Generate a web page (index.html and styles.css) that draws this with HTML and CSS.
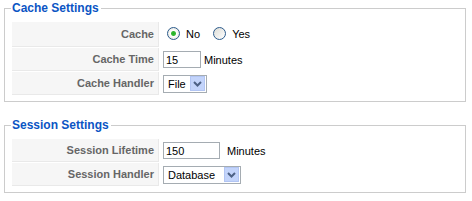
FILE: index.html
```html
<!DOCTYPE html>
<html lang="en">
<head>
    <meta charset="UTF-8">
    <title>Global Configuration</title>
    <link rel="stylesheet" href="styles.css">
</head>
<body>
    <fieldset class="adminform">
        <legend>Cache Settings</legend>
        <table class="admintable">
            <tr class="tall">
                <td class="key">Cache</td>
                <td>
                    <label class="opt"><input type="radio" name="caching" checked>No</label>
                    <label class="opt"><input type="radio" name="caching">Yes</label>
                </td>
            </tr>
            <tr>
                <td class="key">Cache Time</td>
                <td><input type="text" class="inputbox w-short" value="15"><span class="unit">Minutes</span></td>
            </tr>
            <tr>
                <td class="key">Cache Handler</td>
                <td>
                    <span class="selectbox w-file">
                        <select><option>File</option></select>
                        <svg class="arrow" width="15" height="15" viewBox="0 0 15 15"><rect x="0.5" y="0.5" width="14" height="14" fill="#c3d4fb" stroke="#b2c5f3"/><path d="M4 6 L7.5 9.5 L11 6" fill="none" stroke="#4d6185" stroke-width="2"/></svg>
                    </span>
                </td>
            </tr>
        </table>
    </fieldset>

    <fieldset class="adminform">
        <legend>Session Settings</legend>
        <table class="admintable">
            <tr>
                <td class="key">Session Lifetime</td>
                <td><input type="text" class="inputbox w-long" value="150"><span class="unit wide">Minutes</span></td>
            </tr>
            <tr>
                <td class="key">Session Handler</td>
                <td>
                    <span class="selectbox w-db">
                        <select><option>Database</option></select>
                        <svg class="arrow" width="15" height="15" viewBox="0 0 15 15"><rect x="0.5" y="0.5" width="14" height="14" fill="#c3d4fb" stroke="#b2c5f3"/><path d="M4 6 L7.5 9.5 L11 6" fill="none" stroke="#4d6185" stroke-width="2"/></svg>
                    </span>
                </td>
            </tr>
        </table>
    </fieldset>
</body>
</html>
```

FILE: styles.css
```css
body {
    margin: 0;
    background-color: #fff;
    font-family: "Liberation Sans", Arial, sans-serif;
    font-size: 11px;
    color: #000;
}
fieldset.adminform {
    border: 1px solid #ccc;
    margin: 0 6px 15px 4px;
    padding: 0 6px 5px 6px;
}
fieldset.adminform legend {
    color: #0b55c4;
    font-size: 12px;
    font-weight: bold;
    line-height: 16px;
    padding: 0 2px 0 1px;
}
table.admintable {
    border-spacing: 1px;
    margin-top: 5px;
}
table.admintable td {
    height: 22px;
    padding: 0 3px;
    vertical-align: middle;
}
table.admintable tr.tall td {
    height: 24px;
}
table.admintable td.key {
    width: 138px;
    padding: 0 4px;
    background-color: #f6f6f6;
    border-bottom: 1px solid #e9e9e9;
    border-right: 1px solid #e9e9e9;
    color: #666;
    font-weight: bold;
    text-align: right;
}
.opt {
    display: inline-flex;
    align-items: center;
    margin-right: 6px;
}
.opt input {
    appearance: none;
    width: 13px;
    height: 13px;
    margin: 0 6px 0 4px;
    border: 1px solid #2c5b8c;
    border-radius: 50%;
    background: linear-gradient(135deg, #dcdcd6, #fff);
}
.opt input:checked {
    background: radial-gradient(circle, #22b422 0, #37b837 2px, #fff 3px, #e8e8e2 6px);
}
.inputbox {
    box-sizing: border-box;
    height: 17px;
    border: 1px solid #a5acb2;
    padding: 0 2px;
    font-family: inherit;
    font-size: 11px;
    vertical-align: middle;
    margin: 0;
}
.w-short { width: 38px; }
.w-long { width: 57px; }
.unit {
    margin-left: 3px;
    vertical-align: middle;
}
.unit.wide { margin-left: 7px; }
.selectbox {
    position: relative;
    display: inline-block;
    box-sizing: border-box;
    height: 18px;
    border: 1px solid #a5acb2;
    background: #fff;
    vertical-align: middle;
}
.selectbox select {
    appearance: none;
    border: 0;
    background: transparent;
    font-family: inherit;
    font-size: 11px;
    height: 16px;
    padding: 0 0 0 4px;
    width: 100%;
    outline: none;
}
.selectbox .arrow {
    position: absolute;
    right: 1px;
    top: 0;
}
.w-file { width: 44px; }
.w-db { width: 78px; }
```
